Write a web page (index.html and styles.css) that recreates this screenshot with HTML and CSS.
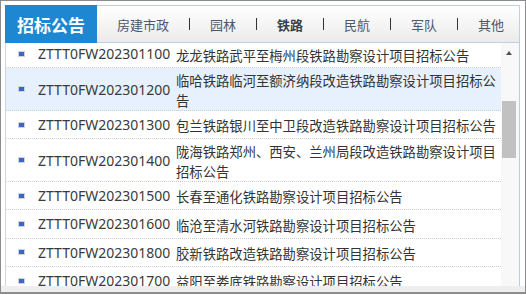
FILE: index.html
```html
<!DOCTYPE html>
<html lang="zh-CN">
<head>
<meta charset="utf-8">
<title>招标公告</title>
<link rel="stylesheet" href="styles.css">
</head>
<body>
<div class="frame">
  <div class="inner">
    <div class="widget">
      <div class="head">
        <div class="head-title">招标公告</div>
        <nav class="tabs">
          <a class="tab">房建市政</a><span class="sep"></span>
          <a class="tab">园林</a><span class="sep"></span>
          <a class="tab active">铁路</a><span class="sep"></span>
          <a class="tab">民航</a><span class="sep"></span>
          <a class="tab">军队</a><span class="sep"></span>
          <a class="tab">其他</a>
        </nav>
      </div>
      <div class="body">
        <div class="viewport">
          <ul class="list">
            <li class="row"><span class="bullet"></span><span class="code">ZTTT0FW202301100</span><span class="name">龙龙铁路武平至梅州段铁路勘察设计项目招标公告</span></li>
            <li class="row hl"><span class="bullet"></span><span class="code">ZTTT0FW202301200</span><span class="name">临哈铁路临河至额济纳段改造铁路勘察设计项目招标公告</span></li>
            <li class="row"><span class="bullet"></span><span class="code">ZTTT0FW202301300</span><span class="name">包兰铁路银川至中卫段改造铁路勘察设计项目招标公告</span></li>
            <li class="row"><span class="bullet"></span><span class="code">ZTTT0FW202301400</span><span class="name">陇海铁路郑州、西安、兰州局段改造铁路勘察设计项目招标公告</span></li>
            <li class="row"><span class="bullet"></span><span class="code">ZTTT0FW202301500</span><span class="name">长春至通化铁路勘察设计项目招标公告</span></li>
            <li class="row"><span class="bullet"></span><span class="code">ZTTT0FW202301600</span><span class="name">临沧至清水河铁路勘察设计项目招标公告</span></li>
            <li class="row"><span class="bullet"></span><span class="code">ZTTT0FW202301800</span><span class="name">胶新铁路改造铁路勘察设计项目招标公告</span></li>
            <li class="row"><span class="bullet"></span><span class="code">ZTTT0FW202301700</span><span class="name">益阳至娄底铁路勘察设计项目招标公告</span></li>
          </ul>
        </div>
        <div class="scrollbar">
          <div class="sb-up"><span class="sb-arrow"></span></div>
          <div class="sb-thumb"></div>
        </div>
      </div>
    </div>
  </div>
  <div class="band"></div>
</div>
</body>
</html>
```

FILE: styles.css
```css
* { box-sizing: border-box; }
html, body { margin: 0; padding: 0; background: #fff; }
body {
  width: 526px;
  height: 295px;
  overflow: hidden;
  font-family: "Noto Sans CJK SC", "Noto Sans", sans-serif;
}
.frame {
  width: 526px;
  height: 294px;
  border: 1px solid #8c8c8c;
  border-bottom-width: 2px;
  display: flex;
  flex-direction: column;
}
.inner {
  flex: 1;
  min-height: 0;
  padding: 4px 5px 0 4px;
  display: flex;
  flex-direction: column;
}
.widget {
  flex: 1;
  min-height: 0;
  display: flex;
  flex-direction: column;
}
.band { height: 6px; background: #eeeeee; flex: none; }

.head { display: flex; height: 38px; flex: none; }
.head-title {
  width: 92px;
  background: #1e87d1;
  color: #fff;
  font-size: 17px;
  font-weight: 700;
  display: flex;
  align-items: center;
  justify-content: center;
}
.tabs {
  flex: 1;
  display: flex;
  align-items: center;
  padding-left: 20px;
  border: 1px solid #b9d1ea;
  border-left: 0;
  background: linear-gradient(#ffffff, #ebebeb);
  font-size: 13px;
  color: #4f566a;
}
.tab { white-space: nowrap; }
.tab.active { font-weight: 700; color: #3a3f4a; }
.sep { width: 1px; height: 12px; background: #333; margin: 0 20px; }

.body {
  flex: 1;
  min-height: 0;
  display: flex;
  border-left: 1px solid #d4d4d4;
  border-right: 1px solid #b9cde3;
}
.viewport { flex: 1; overflow: hidden; }
.list { list-style: none; margin: -3px 0 0; padding: 0; }
.row {
  display: flex;
  align-items: center;
  min-height: 28.33px;
  border-bottom: 1px dotted #cccccc;
  padding-left: 12px;
}
.row.hl { background: #e6f1fd; }
.bullet {
  flex: none;
  width: 7px;
  height: 6px;
  border: 1px solid #cdd2dc;
  background: #3a66c4;
  margin-right: 13px;
}
.code {
  flex: none;
  width: 138px;
  font-family: "Noto Sans", sans-serif;
  font-size: 14px;
  color: #3a3a3a;
  white-space: nowrap;
}
.name {
  flex: 1;
  font-size: 13.33px;
  line-height: 19.33px;
  padding-top: 3px;
  color: #333;
}

.scrollbar {
  flex: none;
  width: 18px;
  background: #f8f8f8;
  padding: 0 3px 0 1px;
  display: flex;
  flex-direction: column;
}
.sb-up { height: 20px; display: flex; align-items: center; justify-content: center; }
.sb-arrow {
  width: 0; height: 0;
  border-left: 3.5px solid transparent;
  border-right: 3.5px solid transparent;
  border-bottom: 4px solid #505050;
}
.sb-thumb { margin-top: 38px; height: 57px; background: #c1c1c1; }
```
